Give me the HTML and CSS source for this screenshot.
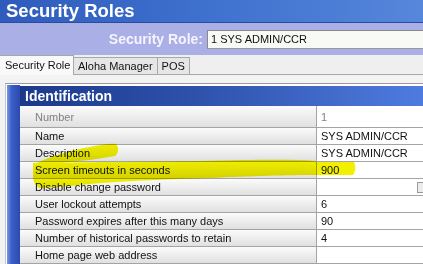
FILE: index.html
```html
<!DOCTYPE html>
<html>
<head>
    <title>Security Roles</title>
    <link rel="stylesheet" href="styles.css">
</head>
<body>
    <div class="titlebar">Security Roles</div>
    <div class="rolebar">
        <span class="rolebar-label">Security Role:</span>
        <div class="rolebox">1 SYS ADMIN/CCR</div>
    </div>
    <div class="tabs">
        <div class="tab active">Security Role</div>
        <div class="tab">Aloha Manager</div>
        <div class="tab">POS</div>
        <div class="tab-fill"></div>
    </div>
    <div class="content">
        <div class="panel">
            <div class="strip"></div>
            <div class="grid">
                <div class="section-head">Identification</div>
                <div class="row first">
                    <div class="label dim">Number</div>
                    <div class="value dim">1</div>
                </div>
                <div class="row">
                    <div class="label">Name</div>
                    <div class="value">SYS ADMIN/CCR</div>
                </div>
                <div class="row">
                    <div class="label">Description</div>
                    <div class="value">SYS ADMIN/CCR</div>
                </div>
                <div class="row">
                    <div class="label">Screen timeouts in seconds</div>
                    <div class="value">900</div>
                </div>
                <div class="row">
                    <div class="label">Disable change password</div>
                    <div class="value check-cell"><span class="checkbox"></span></div>
                </div>
                <div class="row">
                    <div class="label">User lockout attempts</div>
                    <div class="value">6</div>
                </div>
                <div class="row">
                    <div class="label">Password expires after this many days</div>
                    <div class="value">90</div>
                </div>
                <div class="row">
                    <div class="label">Number of historical passwords to retain</div>
                    <div class="value">4</div>
                </div>
                <div class="row">
                    <div class="label">Home page web address</div>
                    <div class="value"></div>
                </div>
            </div>
        </div>
    </div>

    <!-- highlighter marks drawn over the table -->
    <svg class="marker" width="423" height="264" viewBox="0 0 423 264">
        <path d="M34 164 C50 157 70 150 90 147 C100 145 110 143 116 144 C119 147 119 153 115 156 C100 159 80 161 60 163 L40 166 Z"/>
        <path d="M33 163 C80 162 140 162 200 161 C250 160 290 159 316 161 L316 162 L354 162 C356 166 356 171 353 175 L316 175 C290 175 250 176 210 178 C170 179 130 181 100 183 C80 185 60 187 40 188 C35 186 33 181 33 176 Z"/>
    </svg>
</body>
</html>
```

FILE: styles.css
```css
body {
    margin: 0;
    width: 423px;
    height: 264px;
    overflow: hidden;
    position: relative;
    font-family: "Liberation Sans", Arial, sans-serif;
    font-size: 11px;
    color: #111;
    background: #fff;
}
.titlebar {
    height: 23px;
    line-height: 22px;
    padding-left: 6px;
    font-size: 18.5px;
    font-weight: bold;
    color: #fff;
    background: linear-gradient(to right, #2f5cbc, #3f71cf 50%, #5687db);
    border-bottom: 1px solid #2a4c9c;
    box-sizing: border-box;
}
.rolebar {
    display: flex;
    align-items: center;
    height: 32px;
    background: #aab0e6;
}
.rolebar-label {
    width: 203px;
    padding-right: 4px;
    text-align: right;
    font-size: 14px;
    font-weight: bold;
    color: #f4f4ff;
}
.rolebox {
    flex: 1;
    height: 19px;
    line-height: 17px;
    padding-left: 3px;
    box-sizing: border-box;
    background: #f8faf6;
    border-top: 1px solid #8a8a8a;
    border-bottom: 1px solid #9a9a9a;
    border-left: 1px solid #8a8a8a;
}
.tabs {
    display: flex;
    align-items: flex-end;
    height: 20px;
    background: #efefef;
}
.tab {
    flex-shrink: 0;
    height: 18px;
    line-height: 17px;
    padding: 0 4px;
    box-sizing: border-box;
    white-space: nowrap;
    background: #e6e6e6;
    border: 1px solid #a8a8a8;
    border-left: none;
}
.tab.active {
    height: 20px;
    line-height: 19px;
    width: 74px;
    padding-left: 5px;
    background: #f9f9f9;
    border-bottom: none;
}
.tab-fill {
    flex: 1;
    height: 1px;
    background: #a8a8a8;
}
.content {
    padding: 8px 0 0 5px;
    background: #f3f3f3;
}
.panel {
    display: flex;
    border-top: 1px solid #9a9a9a;
    border-left: 1px solid #c8c8c8;
    padding: 1px 0 0 1px;
    background: #fff;
}
.strip {
    width: 13px;
    background: linear-gradient(to right, #7a98e2, #3b5ec8 35%, #2b4aae);
}
.grid {
    flex: 1;
    padding-top: 1px;
}
.section-head {
    height: 20px;
    line-height: 20px;
    padding-left: 5px;
    font-size: 14px;
    font-weight: bold;
    color: #fff;
    background: linear-gradient(to right, #1c3a8c, #2c4fa8 40%, #4f7be0);
}
.row {
    display: flex;
    height: 16px;
    border-bottom: 1px solid #a4a4a4;
}
.row.first {
    height: 21px;
}
.label {
    width: 281px;
    padding-left: 15px;
    display: flex;
    align-items: center;
    background: linear-gradient(#fbfbfb, #e0e0e0);
    border-right: 1px solid #a4a4a4;
    white-space: nowrap;
}
.value {
    flex: 1;
    padding-left: 4px;
    display: flex;
    align-items: center;
    background: #fff;
}
.dim {
    color: #808080;
}
.check-cell {
    justify-content: flex-end;
    overflow: hidden;
}
.checkbox {
    width: 9px;
    height: 9px;
    margin-right: -5px;
    border: 1px solid #999;
    background: #ececec;
}
.marker {
    position: absolute;
    left: 0;
    top: 0;
    pointer-events: none;
    mix-blend-mode: multiply;
}
.marker path {
    fill: #f2f000;
}
```
